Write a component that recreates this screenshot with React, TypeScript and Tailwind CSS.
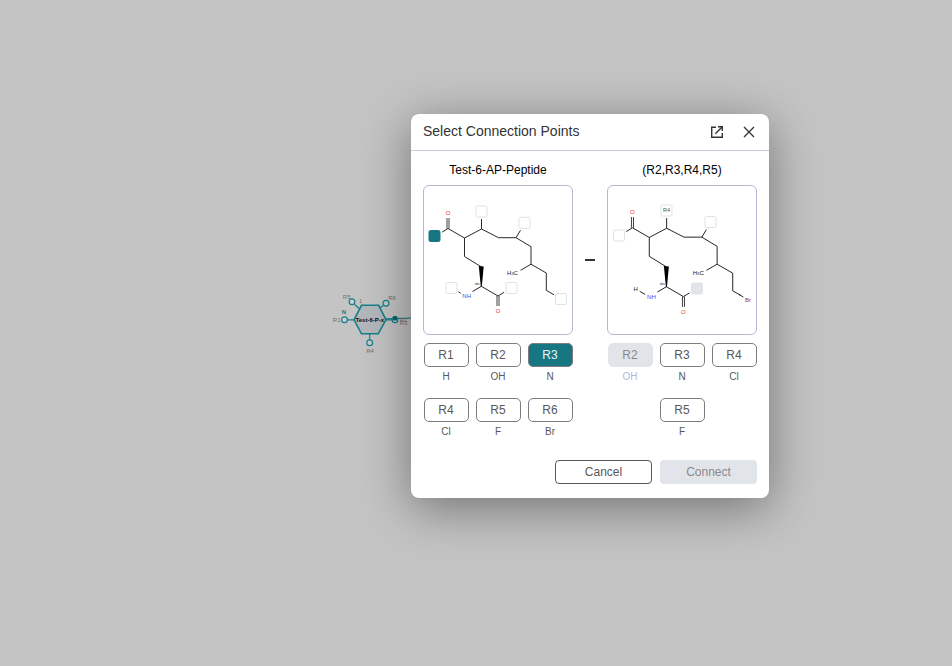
import type { ReactNode } from "react";

type PointState = "idle" | "selected" | "disabled";
type Point = { id: string; leaving: string; state?: PointState };

const leftPoints: Point[] = [
  { id: "R1", leaving: "H" },
  { id: "R2", leaving: "OH" },
  { id: "R3", leaving: "N", state: "selected" },
  { id: "R4", leaving: "Cl" },
  { id: "R5", leaving: "F" },
  { id: "R6", leaving: "Br" },
];

const rightPoints: Point[] = [
  { id: "R2", leaving: "OH", state: "disabled" },
  { id: "R3", leaving: "N" },
  { id: "R4", leaving: "Cl" },
  { id: "R5", leaving: "F" },
];

const buttonStyles: Record<PointState, string> = {
  idle: "border-[#7c7c7f] bg-white text-[#585858]",
  selected: "border-[#7c7c7f] bg-[#167782] text-[#e8f4f5]",
  disabled: "border-[#e1e5ea] bg-[#e1e5ea] text-[#898989]",
};

function PointButton({ id, leaving, state = "idle" }: Point) {
  return (
    <div className="flex w-[45px] flex-col items-center gap-0.5">
      <button
        type="button"
        disabled={state === "disabled"}
        aria-pressed={state === "selected"}
        className={`h-6 w-full rounded-[5px] border text-xs leading-none ${buttonStyles[state]}`}
      >
        {id}
      </button>
      <span
        className={`text-[10px] leading-4 ${state === "disabled" ? "text-[#b4b9d6]" : "text-[#585858]"}`}
      >
        {leaving}
      </span>
    </div>
  );
}

/* Bonds shared by both peptide drawings */
function Scaffold() {
  return (
    <>
      <g fill="none" stroke="#111" strokeWidth="0.9">
        <path d="M442 232.2 L448 228.5 L464.5 238 L481.5 229 L498.5 237.7 H516 L531 246.7 V264.2 L546.3 273 V290.3 L554 294.8" />
        <path d="M447 218 V228.5 M449 218 V228.5" strokeWidth="0.8" />
        <path d="M481.5 229 V219 M516 237.7 L520.5 230.3" />
        <path d="M464.5 238 V256.5 L481.5 267" />
        <path d="M531 264.2 L520.5 270.3" />
        <path d="M472.5 291.5 L481.3 286.3 L498 296 L504 292.3" />
        <path d="M497 296 V306 M499 296 V306" strokeWidth="0.8" />
      </g>
      <path d="M478.8 266 L483.7 266.5 L481.8 286.5 H480.8 Z" fill="#000" />
      <g textAnchor="middle" fontSize="6">
        <text x="448" y="215.2" fill="#f0302c">O</text>
        <text x="498" y="313.4" fill="#f0302c">O</text>
        <text x="466.7" y="298.3" fill="#3b50f0">NH</text>
        <text x="512.5" y="275.2" fill="#222">
          H<tspan fontSize="4">3</tspan>C
        </text>
        <text x="477.2" y="285" fontSize="3" fill="#222">abs</text>
      </g>
    </>
  );
}

function Slot({ x, y, kind = "empty" }: { x: number; y: number; kind?: "empty" | "selected" | "used" }) {
  const fill = kind === "selected" ? "#167782" : kind === "used" ? "#e1e5ea" : "#fff";
  const stroke = kind === "selected" ? "#167782" : "#e1e2e5";
  return <rect x={x} y={y} width="11" height="11" rx="1.5" fill={fill} stroke={stroke} />;
}

function LeftStructure() {
  return (
    <svg viewBox="424 186 148 148" className="block w-full" role="img" aria-label="Test-6-AP-Peptide">
      <Scaffold />
      <path d="M458.5 291.8 L460.8 293.3" stroke="#111" strokeWidth="0.9" />
      <Slot x={429} y={230.5} kind="selected" />
      <Slot x={476} y={206} />
      <Slot x={519} y={217.3} />
      <Slot x={446} y={282.5} />
      <Slot x={506} y={282.5} />
      <Slot x={555.5} y={293.5} />
    </svg>
  );
}

function RightStructure() {
  return (
    <svg viewBox="608 186 148 148" className="block w-full" role="img" aria-label="R2, R3, R4, R5">
      <g transform="matrix(1.02 0 0 1.02 175.5 -5.3)">
        <Scaffold />
      </g>
      <g stroke="#111" strokeWidth="0.9">
        <path d="M739 294.4 L743.3 297" />
        <path d="M639.7 291.3 L645 294.3" />
      </g>
      <Slot x={613.5} y={230} />
      <Slot x={661} y={205} />
      <Slot x={705} y={216.5} />
      <Slot x={691.5} y={283} kind="used" />
      <g textAnchor="middle" fontSize="6">
        <text x="666.5" y="212.4" fontSize="5.5" fill="#555">R4</text>
        <text x="635.7" y="291.2" fill="#222">H</text>
        <text x="748" y="302.3" fill="#a3342f">Br</text>
      </g>
    </svg>
  );
}

function Monomer({ title, points, children }: { title: string; points: Point[]; children: ReactNode }) {
  return (
    <section className="flex w-[150px] flex-col">
      <h3 className="text-center text-xs leading-4 text-black">{title}</h3>
      <div className="mt-[7px] rounded-md border border-[#b4b9d6]">{children}</div>
      <div className="mt-2 flex flex-wrap justify-center gap-x-[7px] gap-y-[13px]">
        {points.map((p) => (
          <PointButton key={p.id} {...p} />
        ))}
      </div>
    </section>
  );
}

/* Hexagonal monomer on the canvas behind the dialog */
function CanvasMonomer() {
  return (
    <svg
      className="absolute top-[290px] left-[328px]"
      width="100"
      height="70"
      viewBox="328 290 100 70"
      aria-hidden="true"
    >
      <g stroke="#16808a" strokeWidth="1.2" fill="none">
        <path d="M386 318.8 L428 317.5" />
        <path d="M354.5 304.5 L361 310 M383.5 305.5 L378 309 M348 319.8 H354 M369.7 334 V340 M386 319.8 H392" />
        <path d="M354 319.8 L361.5 305.3 H378.7 L386 319.8 L378.2 333.8 H361.5 Z" fill="#b4b7bb" strokeWidth="1.6" />
        <g fill="#c8cccc">
          <circle cx="352" cy="301.8" r="2.9" />
          <circle cx="386" cy="303.2" r="2.9" />
          <circle cx="344.5" cy="319.8" r="2.9" />
          <circle cx="369.7" cy="342.8" r="2.9" />
          <circle cx="395" cy="319.8" r="2.9" />
        </g>
      </g>
      <rect x="393" y="316" width="4" height="4.5" rx="0.8" fill="#0e6670" />
      <g textAnchor="middle" fontSize="6" fill="#6f6f6f">
        <text x="346.7" y="299.2">R5</text>
        <text x="360.7" y="303" fontSize="5">1</text>
        <text x="392" y="300.4">R6</text>
        <text x="336.7" y="322">R1</text>
        <text x="370" y="353.2">R4</text>
        <text x="403.5" y="322.2">R2</text>
        <text x="403.5" y="325.4">R3</text>
        <text x="344" y="314.2" fontWeight="bold" fill="#16808a">N</text>
        <text x="369.8" y="322" fontWeight="bold" fill="#111">Test-6-P-x</text>
      </g>
    </svg>
  );
}

export default function App() {
  return (
    <div className="relative flex min-h-screen items-center justify-center bg-[#c4c4c4] pb-[54px] pl-[228px] font-['Liberation_Sans',Arial,sans-serif]">
      <CanvasMonomer />
      <div
        role="dialog"
        aria-labelledby="dialog-title"
        className="relative rounded-lg bg-white shadow-[0_10px_50px_rgba(0,0,0,0.42)]"
      >
        <header className="flex h-[37px] items-center border-b border-[#c5cdd9] pr-3 pl-3">
          <h2 id="dialog-title" className="flex-1 pb-0.5 text-sm leading-5 text-[#333]">
            Select Connection Points
          </h2>
          <div className="flex gap-4">
            <button type="button" aria-label="Expand window" className="size-4 text-[#333]">
              <svg viewBox="0 0 16 16" className="size-4" fill="none" stroke="currentColor" strokeWidth="1.4">
                <path d="M7 3.2 H2.7 V13.3 H13.3 V9" />
                <path d="M6.3 9.7 L12.8 3.2" />
                <path d="M9 2.7 H13.3 V7" />
              </svg>
            </button>
            <button type="button" aria-label="Close" className="size-4 text-[#333]">
              <svg viewBox="0 0 16 16" className="size-4" fill="none" stroke="currentColor" strokeWidth="1.3">
                <path d="M3 3 L13 13 M13 3 L3 13" />
              </svg>
            </button>
          </div>
        </header>
        <div className="flex px-3 pt-[11px]">
          <Monomer title="Test-6-AP-Peptide" points={leftPoints}>
            <LeftStructure />
          </Monomer>
          <div className="flex h-[195px] w-[34px] items-center justify-center">
            <span className="h-0.5 w-2.5 bg-[#333]" />
          </div>
          <Monomer title="(R2,R3,R4,R5)" points={rightPoints}>
            <RightStructure />
          </Monomer>
        </div>
        <footer className="flex justify-end gap-2 px-3 pt-5 pb-3.5">
          <button
            type="button"
            className="h-6 w-[97px] rounded border border-[#585858] bg-white text-xs leading-none text-[#585858]"
          >
            Cancel
          </button>
          <button
            type="button"
            disabled
            className="h-6 w-[97px] rounded bg-[#e1e5ea] text-xs leading-none text-[#898989]"
          >
            Connect
          </button>
        </footer>
      </div>
    </div>
  );
}
